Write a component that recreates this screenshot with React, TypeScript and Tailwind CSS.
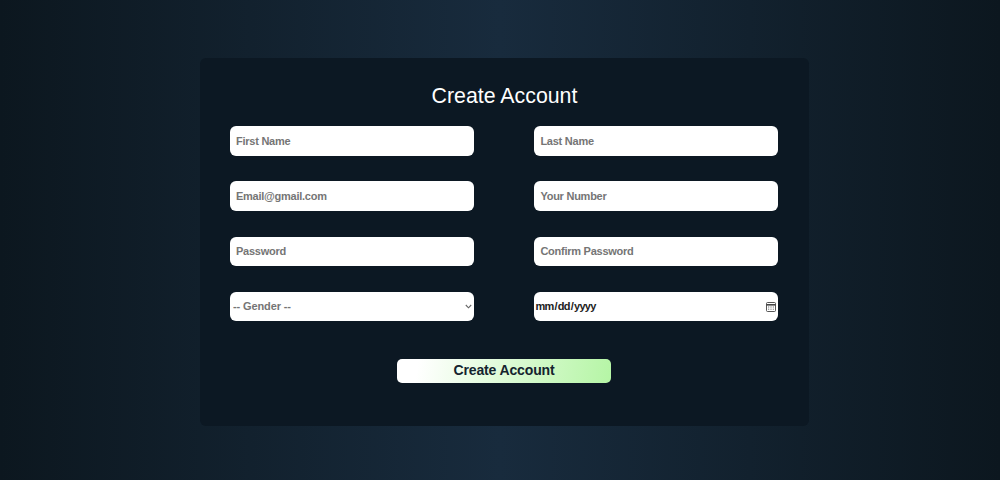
export default function App() {
  const inputClass =
    "w-full h-[29.5px] rounded-[6px] bg-white px-[6px] text-[11px] tracking-[-0.25px] font-bold text-[#111] outline-none placeholder:text-[#757575]";

  return (
    <div className="w-[1000px] h-[480px] overflow-hidden pt-[58px] pl-[200px] bg-[linear-gradient(90deg,#0c171f_0%,#182b3d_50%,#0c171f_100%)] font-['Liberation_Sans',Arial,sans-serif]">
      <form className="w-[609px] h-[368px] rounded-[6px] bg-[#0c1823] px-[30px] pt-[25px]">
        <h1 className="text-center text-[21.33px] leading-[26px] font-normal text-white">Create Account</h1>

        <div className="mt-[17px] grid grid-cols-[244px_244px] gap-x-[60.4px] gap-y-[25.83px]">
          <input className={inputClass} placeholder="First Name" />
          <input className={inputClass} placeholder="Last Name" />
          <input className={inputClass} placeholder="Email@gmail.com" />
          <input className={inputClass} placeholder="Your Number" />
          <input className={inputClass} type="password" placeholder="Password" />
          <input className={inputClass} type="password" placeholder="Confirm Password" />
          <div className="relative">
            <select defaultValue="" className="appearance-none w-full h-[29.5px] rounded-[6px] bg-white pl-[3px] text-[11px] tracking-[-0.12px] font-bold text-[#757575] outline-none">
              <option value="">-- Gender --</option>
              <option value="male">Male</option>
              <option value="female">Female</option>
            </select>
            <svg className="absolute right-[2px] top-[12px] pointer-events-none" width="7" height="5" viewBox="0 0 7 5" fill="none" stroke="#666" strokeWidth="1.1">
              <path d="M0.8 1L3.5 3.8L6.2 1" />
            </svg>
          </div>
          <div className="relative">
            <input className="w-full h-[29.5px] rounded-[6px] bg-white text-[11px] tracking-[-0.75px] font-bold text-[#222] outline-none [&::-webkit-calendar-picker-indicator]:opacity-0" type="date" />
            <svg className="absolute right-[2px] top-[10px] pointer-events-none" width="10" height="10" viewBox="0 0 10 10" fill="none" stroke="#444" strokeWidth="0.9">
              <rect x="0.5" y="0.5" width="9" height="9" rx="1" />
              <path d="M0.5 2.8H9.5" strokeWidth="1.6" />
              <path d="M2.2 5H3.2M4.5 5H5.5M6.8 5H7.8M2.2 7.2H3.2M4.5 7.2H5.5M6.8 7.2H7.8" />
            </svg>
          </div>
        </div>

        <div className="mt-[37.5px] flex justify-center pr-[1px]">
          <button
            type="button"
            className="w-[214px] h-[24px] rounded-[5px] bg-[linear-gradient(100deg,#ffffff_0%,#ffffff_10%,#b5f5a5_100%)] text-[14px] tracking-[-0.14px] font-bold text-[#14232e]"
          >
            Create Account
          </button>
        </div>
      </form>
    </div>
  );
}
